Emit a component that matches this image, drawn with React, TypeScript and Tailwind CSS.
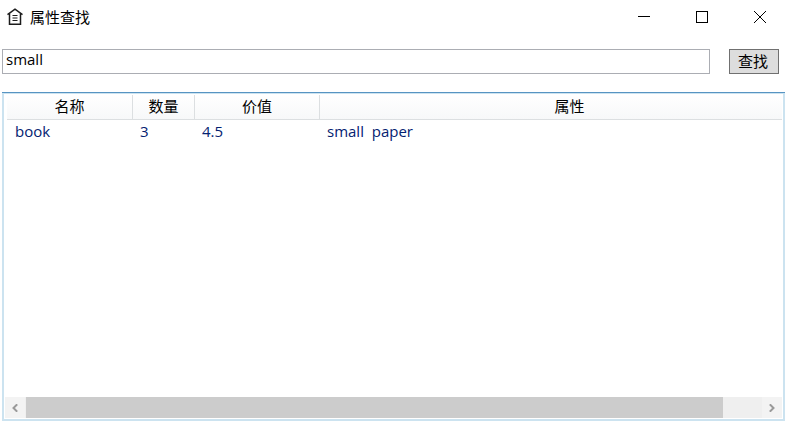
import { useState } from "react";

const items = [{ name: "book", count: "3", value: "4.5", attrs: "small  paper" }];

function HomeIcon() {
  return (
    <svg className="h-[18px] w-4" viewBox="0 0 16 18" fill="none" stroke="#1c1c1c" strokeWidth="1.5" aria-hidden="true">
      <path d="M0.5 6.6 8 1.2l7.5 5.4" />
      <path d="M2.5 5.5v10.8h11V5.5" />
      <path d="M5.5 7.5h5M5.5 10h5M5.5 12.5h5" strokeWidth="1.2" />
    </svg>
  );
}

function TitleBar() {
  const control = "flex h-[34px] w-[58px] items-center justify-center";
  return (
    <header className="flex h-[34px] items-center pr-0.5 pl-[7px]">
      <HomeIcon />
      <h1 className="ml-[7px] flex-1">属性查找</h1>
      <div className="flex">
        <button type="button" aria-label="最小化" className={control}>
          <svg className="size-3" viewBox="0 0 12 12" stroke="#000" shapeRendering="crispEdges">
            <path d="M0 5.5h12" />
          </svg>
        </button>
        <button type="button" aria-label="最大化" className={control}>
          <svg className="size-3" viewBox="0 0 12 12" fill="none" stroke="#000" shapeRendering="crispEdges">
            <path d="M0.5 0.5h11v11h-11z" />
          </svg>
        </button>
        <button type="button" aria-label="关闭" className={control}>
          <svg className="size-3" viewBox="0 0 12 12" stroke="#000" strokeWidth="1">
            <path d="M0 0l12 12M12 0L0 12" />
          </svg>
        </button>
      </div>
    </header>
  );
}

function ScrollBar() {
  const arrow = "flex w-5 items-center justify-center";
  return (
    <div className="flex h-[21px] bg-[#efefef]">
      <button type="button" aria-label="向左滚动" className={`${arrow} mr-px bg-[#f3f3f3]`}>
        <svg className="h-2 w-1.5" viewBox="0 0 6 8" fill="none" stroke="#9a9a9a" strokeWidth="2">
          <path d="M5.2 0.3 1.5 4l3.7 3.7" />
        </svg>
      </button>
      <div className="flex-1">
        <div className="h-full w-[94.7%] bg-[#cccccc]" />
      </div>
      <button type="button" aria-label="向右滚动" className={`${arrow} bg-[#f3f3f3]`}>
        <svg className="h-2 w-1.5" viewBox="0 0 6 8" fill="none" stroke="#9a9a9a" strokeWidth="2">
          <path d="M0.8 0.3 4.5 4 0.8 7.7" />
        </svg>
      </button>
    </div>
  );
}

function ResultTable() {
  const head = "h-[25px] border-r border-b border-[#dcdfe1] p-0 pb-0.5 font-normal";
  const cell = "h-6 p-0 pb-0.5 pl-[7px] text-left whitespace-pre first:pl-2";
  return (
    <section className="mr-1.5 ml-0.5 flex flex-1 flex-col border-t border-[#5794c2]">
      <div className="flex flex-1 flex-col border-2 border-t border-[#cce3f0] p-px">
        <div className="flex-1 overflow-hidden pl-0.5">
          <table className="w-[813px] table-fixed border-separate border-spacing-0">
            <colgroup>
              <col className="w-[126px]" />
              <col className="w-[62px]" />
              <col className="w-[125px]" />
              <col className="w-[500px]" />
            </colgroup>
            <thead className="bg-linear-to-b from-white to-[#f7f8f9]">
              <tr>
                <th className={head}>名称</th>
                <th className={head}>数量</th>
                <th className={head}>价值</th>
                <th className={head}>属性</th>
              </tr>
            </thead>
            <tbody className="text-[#042271]">
              {items.map((item) => (
                <tr key={item.name}>
                  <td className={cell}>{item.name}</td>
                  <td className={cell}>{item.count}</td>
                  <td className={cell}>{item.value}</td>
                  <td className={cell}>{item.attrs}</td>
                </tr>
              ))}
            </tbody>
          </table>
        </div>
        <ScrollBar />
      </div>
    </section>
  );
}

export default function App() {
  const [query, setQuery] = useState("small");
  return (
    <main className="flex h-screen flex-col bg-white pb-1 font-['Open_Sans','Noto_Sans_CJK_SC',sans-serif] text-[15px] leading-5 text-black">
      <TitleBar />
      <form className="mt-[15px] mb-[18px] flex gap-[19px] pr-3 pl-0.5" onSubmit={(e) => e.preventDefault()}>
        <input
          type="text"
          aria-label="属性"
          value={query}
          onChange={(e) => setQuery(e.target.value)}
          className="h-[25px] min-w-0 flex-1 border border-[#abadb3] px-[3px] pb-1.5 outline-none"
        />
        <button type="submit" className="h-[25px] w-[50px] border border-[#707070] bg-[#dddddd] pr-0.5 pb-0.5">
          查找
        </button>
      </form>
      <ResultTable />
    </main>
  );
}
